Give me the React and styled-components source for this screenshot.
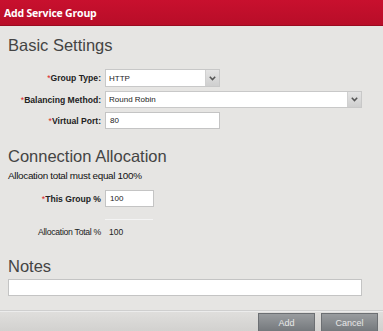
import React from "react";
import styled, { createGlobalStyle } from "styled-components";

const Global = createGlobalStyle`
  html, body { margin: 0; padding: 0; }
  body {
    width: 383px;
    height: 331px;
    overflow: hidden;
    background: #e6e5e3;
    font-family: "Liberation Sans", Arial, sans-serif;
  }
`;

const Dialog = styled.div`
  width: 383px;
  height: 331px;
  display: flex;
  flex-direction: column;
  background: #e6e5e3;
`;

const TitleBar = styled.div`
  height: 26px;
  background: linear-gradient(#c8102e, #b80d28);
  border-bottom: 1px solid #9a0a20;
  color: #fff;
  font-family: "Open Sans", "Liberation Sans", sans-serif;
  font-weight: 700;
  font-size: 10.5px;
  letter-spacing: -0.2px;
  display: flex;
  align-items: center;
  padding-left: 4px;
  box-sizing: border-box;
`;

const Body = styled.div`
  flex: 1;
  padding: 0 8px 0 8px;
  display: flex;
  flex-direction: column;
`;

const Heading = styled.div`
  font-family: "Liberation Sans", Arial, sans-serif;
  font-size: 16.5px;
  color: #444;
  margin-top: ${(p) => p.$top}px;
  line-height: 20px;
  height: 20px;
`;

const Form = styled.div`
  display: grid;
  grid-template-columns: 93px auto;
  column-gap: 4px;
  row-gap: 4px;
  align-items: center;
  justify-items: start;
  margin-top: ${(p) => p.$top}px;
`;

const Label = styled.label`
  justify-self: end;
  font-size: ${(p) => (p.$plain ? 8.7 : 8.6)}px;
  font-weight: ${(p) => (p.$plain ? 400 : 700)};
  color: #222;
  letter-spacing: ${(p) => (p.$plain ? "-0.3px" : "0")};
  margin-top: ${(p) => p.$top || 0}px;
`;

const Star = styled.span`
  color: #d22;
  font-weight: 400;
`;

const Select = styled.div`
  width: ${(p) => p.$w}px;
  height: ${(p) => p.$h || 17}px;
  box-sizing: border-box;
  background: #fff;
  border: 1px solid #c8c8c8;
  display: flex;
  align-items: center;
  font-size: 8px;
  color: #222;
  padding-left: 3px;
`;

const Arrow = styled.span`
  margin-left: auto;
  width: 13px;
  align-self: stretch;
  background: linear-gradient(#e4e4e4, #cfcfcf);
  border-left: 1px solid #d0d0d0;
  display: flex;
  align-items: center;
  justify-content: center;
`;

const Input = styled.div`
  width: ${(p) => p.$w}px;
  height: 17px;
  box-sizing: border-box;
  background: #fff;
  border: 1px solid #c4c4c4;
  display: flex;
  align-items: center;
  font-size: 8px;
  color: #222;
  padding-left: 4px;
`;

const Note = styled.div`
  font-size: 9.9px;
  color: #111;
  letter-spacing: -0.3px;
  margin-top: 4px;
`;

const Rule = styled.div`
  grid-column: 2;
  width: 48px;
  height: 1px;
  background: #f4f4f4;
  margin-top: 8px;
`;

const Value = styled.span`
  font-size: 8.5px;
  color: #222;
  padding-left: 4px;
  margin-top: 3px;
`;

const NotesBox = styled.div`
  height: 17px;
  margin-top: 3px;
  width: 354px;
  box-sizing: border-box;
  background: #fff;
  border: 1px solid #c4c4c4;
`;

const Footer = styled.div`
  height: 20px;
  border-top: 1px solid #cfcfcf;
  box-shadow: inset 0 1px 0 #ececec;
  background: linear-gradient(#e0dfdd, #d2d1cf);
  display: flex;
  justify-content: flex-end;
  align-items: flex-end;
  gap: 6px;
  padding-right: 5px;
`;

const Button = styled.button`
  width: 57px;
  height: 18px;
  border: 1px solid #6c6f73;
  border-bottom: none;
  background: linear-gradient(#999c9f, #75797d);
  color: #e8e8e8;
  font-family: "Liberation Sans", Arial, sans-serif;
  font-size: 9px;
  padding: 0;
`;

const Chevron = () => (
  <svg width="7" height="5" viewBox="0 0 7 5">
    <path d="M0.8 0.8 L3.5 3.6 L6.2 0.8" fill="none" stroke="#555" strokeWidth="1.5" />
  </svg>
);

export default function App() {
  return (
    <>
      <Global />
      <Dialog>
        <TitleBar>Add Service Group</TitleBar>
        <Body>
          <Heading $top={9}>Basic Settings</Heading>
          <Form $top={14}>
            <Label><Star>*</Star>Group Type:</Label>
            <Select $w={115} $h={18}>HTTP<Arrow><Chevron /></Arrow></Select>
            <Label><Star>*</Star>Balancing Method:</Label>
            <Select $w={257}>Round Robin<Arrow><Chevron /></Arrow></Select>
            <Label><Star>*</Star>Virtual Port:</Label>
            <Input $w={115}>80</Input>
          </Form>
          <Heading $top={17}>Connection Allocation</Heading>
          <Note>Allocation total must equal 100%</Note>
          <Form $top={9}>
            <Label><Star>*</Star>This Group %</Label>
            <Input $w={49}>100</Input>
            <Rule />
            <Label $plain $top={3}>Allocation Total %</Label>
            <Value>100</Value>
          </Form>
          <Heading $top={19}>Notes</Heading>
          <NotesBox />
        </Body>
        <Footer>
          <Button>Add</Button>
          <Button>Cancel</Button>
        </Footer>
      </Dialog>
    </>
  );
}
